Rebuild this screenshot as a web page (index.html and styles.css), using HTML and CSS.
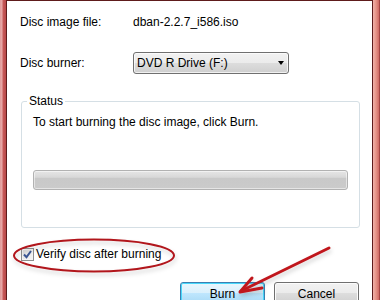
FILE: index.html
```html
<!DOCTYPE html>
<html lang="en">
<head>
    <meta charset="UTF-8">
    <meta name="viewport" content="width=device-width, initial-scale=1.0">
    <title>Burn Disc Image</title>
    <link rel="stylesheet" href="styles.css">
</head>
<body>
    <div class="frame">
        <div class="dialog">
            <div class="row">
                <span class="label">Disc image file:</span>
                <span class="value">dban-2.2.7_i586.iso</span>
            </div>
            <div class="row row-burner">
                <span class="label">Disc burner:</span>
                <div class="select">
                    <span>DVD R Drive (F:)</span>
                    <span class="caret"></span>
                </div>
            </div>

            <fieldset class="status">
                <legend>Status</legend>
                <p class="status-text">To start burning the disc image, click Burn.</p>
                <div class="progress"></div>
            </fieldset>

            <label class="check">
                <span class="box">
                    <svg width="9" height="9" viewBox="0 0 9 9"><path d="M1 4.5 L3.5 7.2 L8 1" fill="none" stroke="#3b5694" stroke-width="2"/></svg>
                </span>
                Verify disc after burning
            </label>

            <div class="buttons">
                <button class="btn btn-default">Burn</button>
                <button class="btn">Cancel</button>
            </div>
        </div>

        <!-- annotation marks drawn over the dialog -->
        <svg class="marks" width="380" height="300" viewBox="0 0 380 300">
            <defs>
                <filter id="soft" x="-10%" y="-30%" width="120%" height="170%">
                    <feDropShadow dx="1" dy="3" stdDeviation="2" flood-color="#000" flood-opacity="0.18"/>
                </filter>
            </defs>
            <ellipse cx="94" cy="255.5" rx="80" ry="16" fill="none" stroke="#b1141a" stroke-width="2" filter="url(#soft)"/>
            <g fill="none" stroke="#c0161c" stroke-width="3" stroke-linecap="round" stroke-linejoin="round" filter="url(#soft)">
                <path d="M329 248 L241 291"/>
                <path d="M252 278 L240 292 L262 288"/>
            </g>
        </svg>
    </div>
</body>
</html>
```

FILE: styles.css
```css
*{padding: 0;margin: 0;box-sizing: border-box;}
html,body{
    width: 100%;
    height: 100%;
}
body{
    overflow: hidden;
    font-family: "Liberation Sans", Arial, sans-serif;
    font-size: 12px;
    color: #000;
}
.frame{
    position: relative;
    display: flex;
    height: 300px;
    padding: 0 7px 0 6px;
    overflow: hidden;
    background:
        linear-gradient(to right, #e09a9a 0, #e7aaa8 2px, #c65a5a 3px, #b84848 6px, transparent 6px) left top / 7px 100% no-repeat,
        linear-gradient(to right, #f0b0aa 0, #e59488 3px, #d06a66 6px, #7a2222 7px) right top / 7px 100% no-repeat,
        #c05050;
}
.dialog{
    flex: 1;
    background: #fff;
    border-left: 1px solid #5e1b1b;
    border-right: 1px solid #5e1b1b;
    border-top: 1px solid #5e1b1b;
    padding: 13px 12px 0 13px;
}
.row{
    display: flex;
    align-items: center;
    line-height: 16px;
}
.row .label{
    width: 113px;
}
.row-burner{
    margin-top: 22px;
}
.select{
    width: 156px;
    height: 22px;
    display: flex;
    align-items: center;
    justify-content: space-between;
    padding: 0 4px 0 3px;
    border: 1px solid #707070;
    border-radius: 3px;
    background: linear-gradient(#f2f2f2 0, #ebebeb 50%, #dddddd 50%, #cfcfcf 100%);
    box-shadow: inset 0 0 0 1px rgba(255,255,255,.7);
}
.caret{
    width: 0;
    height: 0;
    border-top: 4px solid #000;
    border-left: 3.5px solid transparent;
    border-right: 3.5px solid transparent;
}

/* status group */
.status{
    margin: 19px 0 0 1px;
    padding: 5px 11px 37px 11px;
    border: 1px solid #d5dfe5;
    border-radius: 3px;
}
.status legend{
    margin-left: -6px;
    padding: 0 2px;
    line-height: 16px;
}
.status-text{
    line-height: 16px;
}
.progress{
    margin-top: 40px;
    height: 20px;
    border: 1px solid #b2b2b2;
    border-radius: 3px;
    background: linear-gradient(#e6e6e6 0, #d8d8d8 35%, #c9c9c9 40%, #cbcbcb 100%);
    box-shadow: inset 0 0 0 1px rgba(255,255,255,.5);
}

/* checkbox */
.check{
    display: flex;
    align-items: center;
    margin: 18px 0 0 1px;
    line-height: 16px;
}
.check .box{
    width: 13px;
    height: 13px;
    margin-right: 2px;
    display: flex;
    align-items: center;
    justify-content: center;
    border: 1px solid #8e8f8f;
    background: linear-gradient(135deg, #dcdcdc, #f6f6f6);
    box-shadow: inset 0 0 0 1px #f4f4f4;
}

/* buttons */
.buttons{
    display: flex;
    justify-content: flex-end;
    gap: 9px;
    margin: 20px 1px 0 0;
}
.btn{
    width: 85px;
    height: 23px;
    font-family: inherit;
    font-size: 12px;
    color: #000;
    border: 1px solid #707070;
    border-radius: 3px;
    background: linear-gradient(#f2f2f2 0, #ebebeb 50%, #dddddd 50%, #cfcfcf 100%);
    box-shadow: inset 0 0 0 1px #fcfcfc;
}
.btn-default{
    border-color: #3c7fb1;
    background: linear-gradient(#eaf6fd 0, #d9f0fc 50%, #bee6fd 50%, #a7d9f5 100%);
    box-shadow: inset 0 0 0 1px #48d8fb;
}

.marks{
    position: absolute;
    left: 0;
    top: 0;
    pointer-events: none;
}
```
